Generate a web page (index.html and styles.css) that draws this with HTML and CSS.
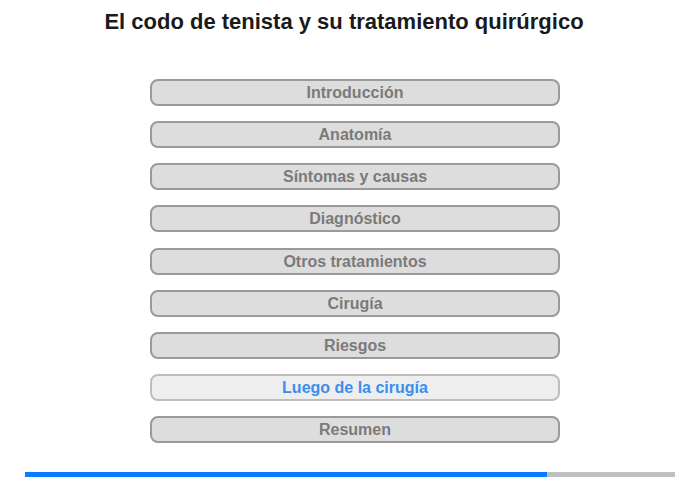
FILE: index.html
```html
<!DOCTYPE html>
<html lang="es">
  <head>
    <meta charset="UTF-8" />
    <meta name="viewport" content="width=device-width, initial-scale=1.0" />
    <title>El codo de tenista y su tratamiento quirúrgico</title>
    <link rel="stylesheet" href="styles.css">
  </head>
  <body>
    <div class="page">
      <h1 class="title">El codo de tenista y su tratamiento quirúrgico</h1>

      <!-- Chapter menu -->
      <div class="menu">
        <div class="menu-item">Introducción</div>
        <div class="menu-item">Anatomía</div>
        <div class="menu-item">Síntomas y causas</div>
        <div class="menu-item">Diagnóstico</div>
        <div class="menu-item">Otros tratamientos</div>
        <div class="menu-item">Cirugía</div>
        <div class="menu-item">Riesgos</div>
        <div class="menu-item active">Luego de la cirugía</div>
        <div class="menu-item">Resumen</div>
      </div>

      <!-- Progress bar -->
      <div class="progress">
        <div class="progress-fill" style="width: 522px"></div>
      </div>
    </div>
  </body>
</html>
```

FILE: styles.css
```css
/* Page basics */
body {
  margin: 0;
  font-family: "Liberation Sans", Arial, sans-serif;
  background: white;
}

.page {
  width: 700px;
  height: 480px;
  overflow: hidden;
}

/* Title */
.title {
  margin: 0;
  padding: 9px 12px 0 0;
  font-size: 22px;
  line-height: 25px;
  font-weight: bold;
  color: #1a1a1a;
  text-align: center;
}

/* Menu buttons */
.menu {
  display: flex;
  flex-direction: column;
  gap: 15.125px;
  width: 410px;
  margin: 45px 0 0 150px;
}

.menu-item {
  box-sizing: border-box;
  height: 27px;
  border: 2px solid #9a9a9a;
  border-radius: 8px;
  background: #dddddd;
  color: #7a7a7a;
  font-size: 16px;
  font-weight: bold;
  line-height: 23px;
  text-align: center;
}

.menu-item.active {
  background: #eeeeee;
  border-color: #bdbdbd;
  color: #3a8ef0;
}

/* Progress bar */
.progress {
  width: 650px;
  height: 5px;
  margin: 29px 0 0 25px;
  background: #c0c0c0;
}

.progress-fill {
  height: 100%;
  background: #0a7cff;
}
```
